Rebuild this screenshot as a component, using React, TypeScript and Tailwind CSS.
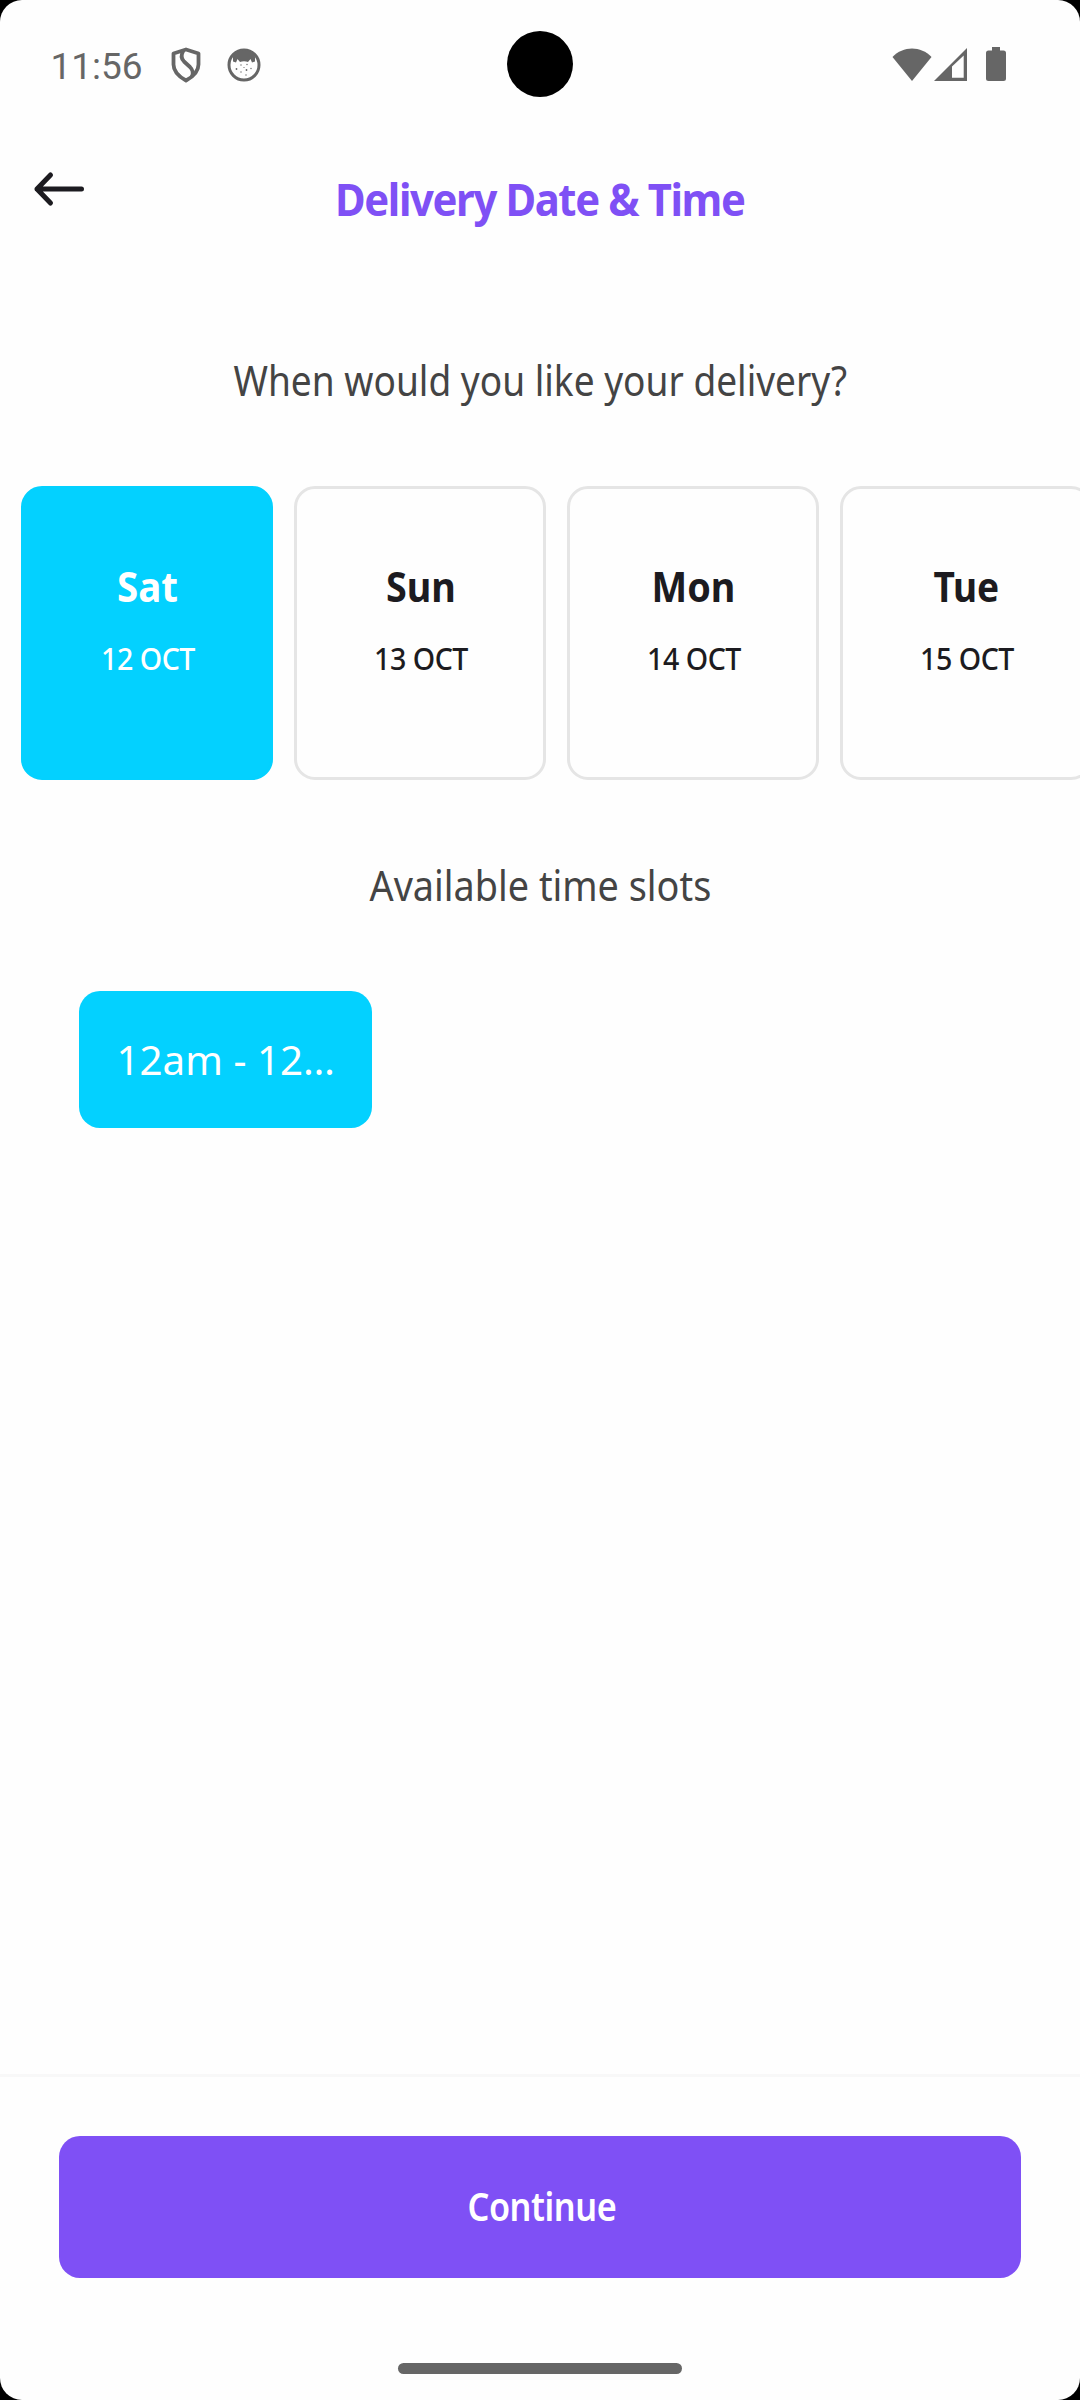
import { useLayoutEffect, useRef, useState } from "react";

/** Single line of text, condensed or widened to a given width. */
function FitText({ children, width, className }: { children: string; width: number; className: string }) {
  const ref = useRef<HTMLSpanElement>(null);
  const [scale, setScale] = useState(1);
  useLayoutEffect(() => {
    if (ref.current) setScale(width / ref.current.offsetWidth);
  }, [width, children]);
  return (
    <span ref={ref} className={`inline-block shrink-0 whitespace-nowrap ${className}`} style={{ transform: `scaleX(${scale})` }}>
      {children}
    </span>
  );
}

const days = [
  { day: "Sat", date: "12 OCT", width: 61, active: true },
  { day: "Sun", date: "13 OCT", width: 70, active: false },
  { day: "Mon", date: "14 OCT", width: 84, active: false },
  { day: "Tue", date: "15 OCT", width: 66, active: false },
];

function StatusBar() {
  return (
    <div className="relative flex h-32 items-center justify-between pr-[74px] pl-[50px] text-[#666666]">
      <div className="flex items-center">
        <div className="flex w-[93px] justify-center pt-1.5 font-[Roboto] text-[37px] leading-[48px]">
          <FitText width={92} className="">11:56</FitText>
        </div>
        <svg className="mt-0.5 ml-[27px] h-9 w-8" viewBox="0 0 32 36" fill="none" stroke="currentColor" strokeWidth="3.800" strokeLinejoin="round">
          <path d="M16 2.500 3.500 6.500v11c0 6.500 4.200 11.500 12.500 16 8.300-4.500 12.500-9.500 12.500-16v-11L16 2.500Z" />
          <path d="M13.500 3.500c-2.500 4-2.500 8 .5 11l6 5.500c3 3 3.500 6 2 9.500" />
        </svg>
        <svg className="mt-0.5 ml-6 h-9 w-9" viewBox="0 0 36 36" fill="none">
          <circle cx="18" cy="18" r="15" stroke="currentColor" strokeWidth="3" />
          <path d="M7 9.500C10 5 14 3 18 3s8 2 11 6.500L29 14.500l-3 1-1.500-3.500-2.500 3c-2.500-1-5.500-1-8 0l-2.500-3-1.500 3.500-3-1Z" fill="currentColor" />
          <g fill="currentColor">
            <circle cx="15" cy="18" r="0.700" /><circle cx="21" cy="17.500" r="0.700" />
            <circle cx="10.500" cy="22" r="0.900" /><circle cx="18" cy="20.500" r="0.600" />
            <circle cx="20.500" cy="23" r="0.900" /><circle cx="25" cy="21.500" r="0.700" />
            <circle cx="15" cy="25" r="0.700" /><circle cx="20" cy="28" r="0.700" />
          </g>
        </svg>
      </div>
      <div className="absolute top-[31px] left-[507px] size-[66px] rounded-full bg-black" />
      <div className="flex items-center">
        <svg className="h-[33px] w-10" viewBox="0 0 40 33" fill="currentColor">
          <path d="M20 33 .5 9C11-2.500 29-2.500 39.500 9Z" />
        </svg>
        <svg className="ml-[2px] h-[33px] w-[33px]" viewBox="0 0 33 33" fill="currentColor" fillRule="evenodd">
          <path d="M33 0v33H0ZM18 18.500V29.700H29.700V7.500Z" />
        </svg>
        <svg className="ml-[19px] h-[34px] w-5" viewBox="0 0 20 34" fill="currentColor">
          <path d="M6 0h8v3.500h3.500A2.500 2.500 0 0 1 20 6v25.500a2.500 2.500 0 0 1-2.500 2.500h-15A2.500 2.500 0 0 1 0 31.500V6a2.500 2.500 0 0 1 2.500-2.500H6Z" />
        </svg>
      </div>
    </div>
  );
}

export default function App() {
  return (
    <div className="h-[2400px] w-[1080px] overflow-hidden bg-black font-['Noto_Sans',sans-serif]">
      <div className="flex h-full flex-col overflow-hidden rounded-[22px] bg-[#fefefe]">
        <StatusBar />
        <header className="flex h-[140px] items-center justify-center">
          <button aria-label="Back" className="-mt-[19px] ml-[31px] h-9 w-14 shrink-0">
            <svg className="h-9 w-14" viewBox="0 0 56 36" fill="none" stroke="#1c1b20" strokeWidth="5" strokeLinecap="round" strokeLinejoin="round">
              <path d="M50.500 18H6M19.500 4 6 18l13.500 14" />
            </svg>
          </button>
          <h1 className="mr-[87px] flex flex-1 justify-center text-[45.5px] leading-[60px] font-bold tracking-[-1.5px] text-[#7f50f5]">
            <FitText width={410} className="">Delivery Date &amp; Time</FitText>
          </h1>
        </header>

        <main className="flex flex-1 flex-col">
          <h2 className="mt-[82px] flex justify-center text-[41px] leading-[60px] text-[#444444]">
            <FitText width={614} className="font-normal">When would you like your delivery?</FitText>
          </h2>

          <div className="mt-[76px] flex gap-[21px] overflow-hidden pl-[21px]">
            {days.map(({ day, date, width, active }) => (
              <button
                key={day}
                className={`flex h-[294px] w-[252px] shrink-0 flex-col items-center rounded-[21px] border-[3px] pt-[67px] pl-px ${active ? "border-[#03d1ff] bg-[#03d1ff] text-white" : "border-[#e5e5e5] text-[#1c1b20]"}`}
              >
                <span className="flex justify-center text-[41px] leading-[60px]">
                  <FitText width={width} className="font-bold">{day}</FitText>
                </span>
                <span className="mt-[22px] flex justify-center text-[31px] leading-10 tracking-[-0.5px]">
                  <FitText width={94} className="font-medium">{date}</FitText>
                </span>
              </button>
            ))}
          </div>

          <h2 className="mt-[75px] flex justify-center pl-px text-[41px] leading-[60px] text-[#444444]">
            <FitText width={342} className="font-normal">Available time slots</FitText>
          </h2>

          <button className="mt-[76px] ml-[79px] flex h-[137px] w-[293px] items-center justify-center rounded-[21px] bg-[#03d1ff] pl-px text-[40.5px] leading-[60px] text-white">
            <FitText width={218} className="font-normal">12am - 12…</FitText>
          </button>
        </main>

        <footer className="flex h-[326px] flex-col items-center border-t-[3px] border-[#f8f8f8]">
          <button className="mt-[59px] flex h-[142px] w-[962px] shrink-0 items-center justify-center rounded-[21px] bg-[#7f50f5] pb-[3px] pl-[3px] text-[40px] leading-[60px] tracking-[-0.5px] text-white">
            <FitText width={149} className="font-semibold">Continue</FitText>
          </button>
          <div className="mt-[85px] h-[11px] w-[284px] shrink-0 rounded-full bg-[#666666]" />
        </footer>
      </div>
    </div>
  );
}
